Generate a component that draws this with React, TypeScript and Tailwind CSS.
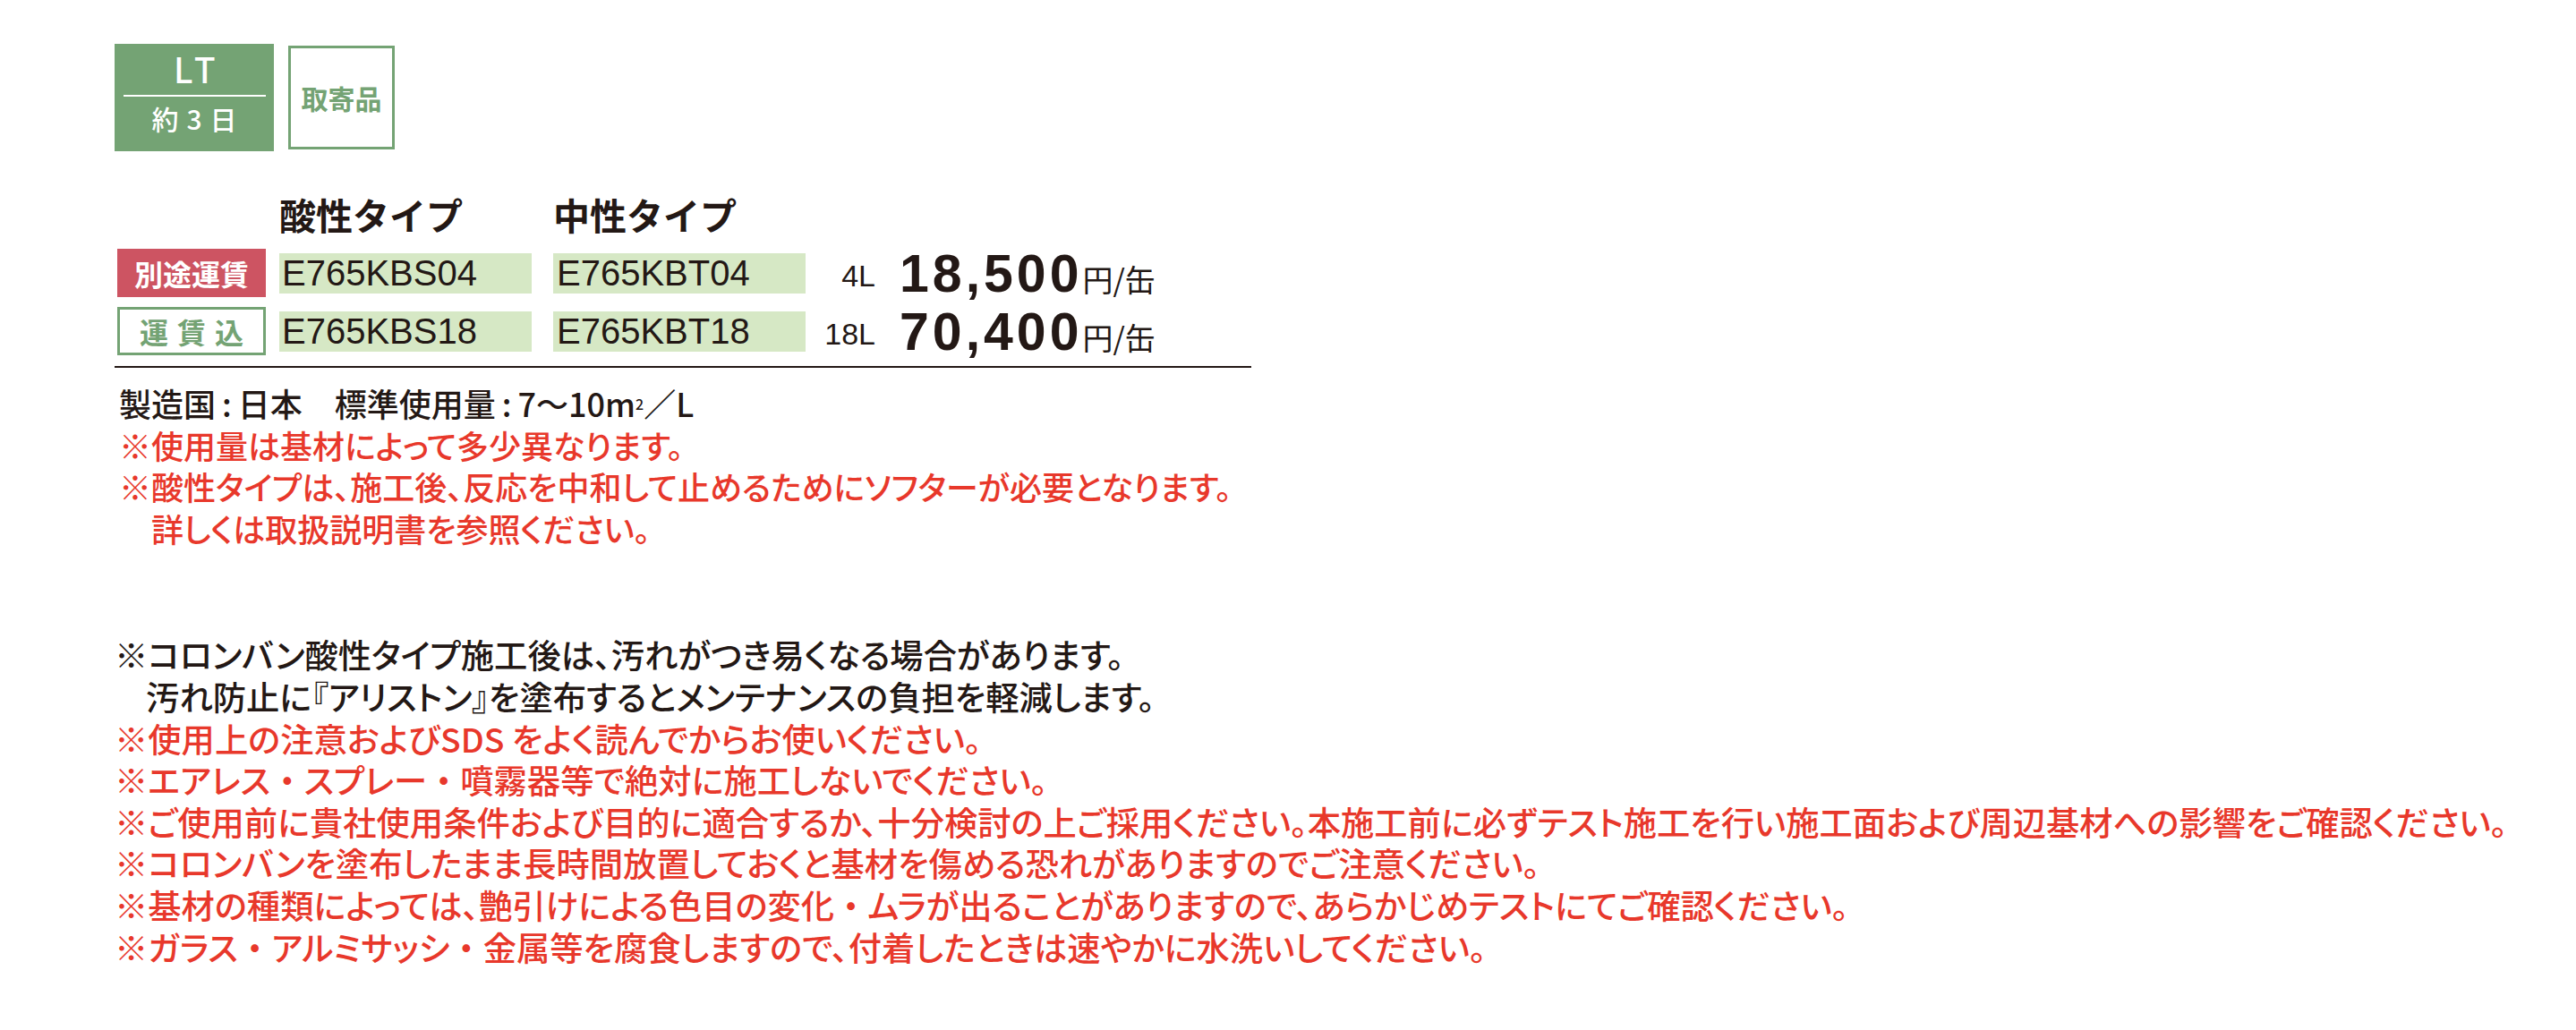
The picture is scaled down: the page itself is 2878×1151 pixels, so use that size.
import type { ReactNode } from 'react';

const INK = 'text-[#231815]';
const RED = 'text-[#e8382b]';
const LATIN = "font-['Liberation_Sans',Arial,sans-serif]";

type NoteLine = { text: ReactNode; red: boolean; indent: boolean };

// the middle dot keeps its full width in the print layout
function dots(s: string) {
  const parts = s.split('・');
  return parts.map((p, i) => (
    <span key={i}>
      {p}
      {i < parts.length - 1 && <span className="[font-feature-settings:normal]">・</span>}
    </span>
  ));
}

const notesTop: NoteLine[] = [
  {
    text: (
      <>
        製造国<span className="mx-[7px]">:</span>日本　標準使用量<span className="mx-[7px]">:</span>7〜10m
        <sup className="text-[16px]">2</sup>／L
      </>
    ),
    red: false,
    indent: false,
  },
  { text: '※使用量は基材によって多少異なります。', red: true, indent: false },
  { text: '※酸性タイプは、施工後、反応を中和して止めるためにソフターが必要となります。', red: true, indent: false },
  { text: '詳しくは取扱説明書を参照ください。', red: true, indent: true },
];

const notesBottom: NoteLine[] = [
  { text: '※コロンバン酸性タイプ施工後は、汚れがつき易くなる場合があります。', red: false, indent: false },
  { text: '汚れ防止に『アリストン』を塗布するとメンテナンスの負担を軽減します。', red: false, indent: true },
  { text: '※使用上の注意およびSDS をよく読んでからお使いください。', red: true, indent: false },
  { text: dots('※エアレス・スプレー・噴霧器等で絶対に施工しないでください。'), red: true, indent: false },
  {
    text: '※ご使用前に貴社使用条件および目的に適合するか、十分検討の上ご採用ください。本施工前に必ずテスト施工を行い施工面および周辺基材への影響をご確認ください。',
    red: true,
    indent: false,
  },
  { text: '※コロンバンを塗布したまま長時間放置しておくと基材を傷める恐れがありますのでご注意ください。', red: true, indent: false },
  {
    text: dots('※基材の種類によっては、艶引けによる色目の変化・ムラが出ることがありますので、あらかじめテストにてご確認ください。'),
    red: true,
    indent: false,
  },
  { text: dots('※ガラス・アルミサッシ・金属等を腐食しますので、付着したときは速やかに水洗いしてください。'), red: true, indent: false },
];

const rows = [
  { label: 'separate', acid: 'E765KBS04', neutral: 'E765KBT04', size: '4L', price: '18,500' },
  { label: 'included', acid: 'E765KBS18', neutral: 'E765KBT18', size: '18L', price: '70,400' },
];

function Note({ text, red, indent, pad }: NoteLine & { pad: string }) {
  return (
    <p className={`whitespace-nowrap ${red ? RED : INK} ${indent ? pad : ''}`}>
      {text}
    </p>
  );
}

function Label({ kind }: { kind: string }) {
  if (kind === 'separate') {
    return (
      <div className="ml-[3px] flex h-[54px] w-[166px] items-center justify-center bg-[#cd5462] text-[32px] font-bold leading-none text-white">
        別途運賃
      </div>
    );
  }
  return (
    <div className="ml-[3px] flex h-[54px] w-[166px] items-center justify-center border-[3px] border-[#74a374] pl-[10px] text-[32px] font-bold leading-none tracking-[10px] text-[#74a374]">
      運賃込
    </div>
  );
}

export default function App() {
  return (
    <div
      className={`h-[1151px] w-[2878px] overflow-hidden bg-white pl-[128px] pt-[49px] font-['Noto_Sans_CJK_JP',sans-serif] ${INK}`}
    >
      {/* lead time + order badges */}
      <div className="flex items-start gap-4">
        <div className="flex h-[120px] w-[178px] flex-col items-center bg-[#74a374] text-white">
          <div className="flex h-[57px] items-center pl-[3px] font-['Noto_Sans',sans-serif] text-[40px] font-medium leading-none tracking-[3px]">
            LT
          </div>
          <div className="h-[2px] w-[159px] bg-white" />
          <div className="flex h-[47px] items-center pl-[9px] text-[30px] font-medium leading-none tracking-[9px]">
            約3日
          </div>
        </div>
        <div className="mt-[2px] flex h-[116px] w-[119px] items-center justify-center border-[3px] border-[#74a374] text-[30px] font-bold leading-none text-[#74a374]">
          取寄品
        </div>
      </div>

      {/* product table */}
      <div className="mt-[50px] flex text-[41px] font-bold leading-none">
        <div className="ml-[3px] w-[166px]" />
        <div className="ml-[15px] w-[282px]">酸性タイプ</div>
        <div className="ml-[24px] w-[282px]">中性タイプ</div>
      </div>

      {rows.map((r, i) => (
        <div key={r.acid} className={`flex h-[54px] items-center ${i === 0 ? 'mt-[18px]' : 'mt-[11px]'}`}>
          <Label kind={r.label} />
          <div className={`ml-[15px] flex h-[45px] w-[282px] items-center bg-[#d6e8c5] pl-[3px] text-[40px] leading-none ${LATIN}`}>
            {r.acid}
          </div>
          <div className={`ml-[24px] flex h-[45px] w-[282px] items-center bg-[#d6e8c5] pl-[4px] text-[40px] leading-none ${LATIN}`}>
            {r.neutral}
          </div>
          <div className={`w-[78px] pt-[6px] text-right text-[34px] leading-none ${LATIN}`}>{r.size}</div>
          <div className="ml-[27px] flex items-baseline pt-[3px]">
            <span className={`text-[59px] font-bold leading-none tracking-[4px] ${LATIN}`}>{r.price}</span>
            <span className="text-[34px] leading-none">円/缶</span>
          </div>
        </div>
      ))}

      <div className="mt-[12px] h-[2px] w-[1270px] bg-[#231815]" />

      {/* notes */}
      <div className="mt-[16px] pl-[5px] text-[36px] font-medium leading-[46.6px] [font-feature-settings:'palt']">
        {notesTop.map((n, i) => (
          <Note key={i} {...n} pad="pl-[36px]" />
        ))}
      </div>

      <div className="mt-[95px] text-[37.3px] font-medium leading-[46.6px] [font-feature-settings:'palt']">
        {notesBottom.map((n, i) => (
          <Note key={i} {...n} pad="pl-[35px]" />
        ))}
      </div>
    </div>
  );
}
